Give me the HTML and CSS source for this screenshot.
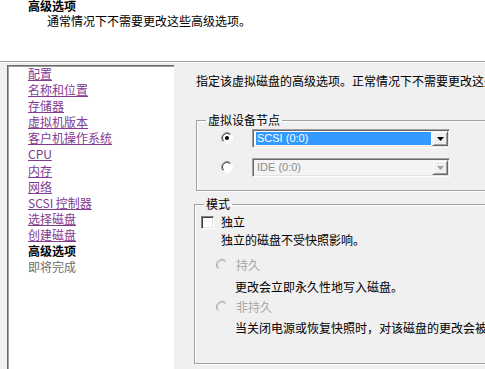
FILE: index.html
```html
<!DOCTYPE html>
<html lang="zh-CN">
<head>
<meta charset="utf-8">
<title>高级选项</title>
<link rel="stylesheet" href="styles.css">
</head>
<body>
<header class="header">
  <div class="title">高级选项</div>
  <div class="subtitle">通常情况下不需要更改这些高级选项。</div>
</header>
<div class="main">
  <nav class="steps">
    <a class="step link">配置</a>
    <a class="step link">名称和位置</a>
    <a class="step link">存储器</a>
    <a class="step link">虚拟机版本</a>
    <a class="step link">客户机操作系统</a>
    <a class="step link">CPU</a>
    <a class="step link">内存</a>
    <a class="step link">网络</a>
    <a class="step link">SCSI 控制器</a>
    <a class="step link">选择磁盘</a>
    <a class="step link">创建磁盘</a>
    <span class="step current">高级选项</span>
    <span class="step pending">即将完成</span>
  </nav>
  <section class="content">
    <p class="intro">指定该虚拟磁盘的高级选项。正常情况下不需要更改这些选项。</p>
    <fieldset class="group node">
      <legend class="legend">虚拟设备节点</legend>
      <div class="node-row">
        <svg class="radio" width="12" height="12" viewBox="0 0 12 12">
          <circle cx="6" cy="6" r="5" fill="#fff"/>
          <path d="M2.1 9.9 A5.5 5.5 0 0 1 9.9 2.1" fill="none" stroke="#9a9a9a" stroke-width="1"/>
          <path d="M2.8 9.2 A4.5 4.5 0 0 1 9.2 2.8" fill="none" stroke="#404040" stroke-width="1"/>
          <path d="M9.9 2.1 A5.5 5.5 0 0 1 2.1 9.9" fill="none" stroke="#ffffff" stroke-width="1"/>
          <circle cx="6" cy="6" r="2" fill="#000"/>
        </svg>
        <div class="combo">
          <span class="combo-value selected">SCSI (0:0)</span>
          <span class="combo-btn">
            <svg width="7" height="4" viewBox="0 0 7 4"><polygon points="0,0 7,0 3.5,4" fill="#000"/></svg>
          </span>
        </div>
      </div>
      <div class="node-row">
        <svg class="radio" width="12" height="12" viewBox="0 0 12 12">
          <circle cx="6" cy="6" r="5" fill="#fff"/>
          <path d="M2.1 9.9 A5.5 5.5 0 0 1 9.9 2.1" fill="none" stroke="#9a9a9a" stroke-width="1"/>
          <path d="M2.8 9.2 A4.5 4.5 0 0 1 9.2 2.8" fill="none" stroke="#404040" stroke-width="1"/>
          <path d="M9.9 2.1 A5.5 5.5 0 0 1 2.1 9.9" fill="none" stroke="#ffffff" stroke-width="1"/>
        </svg>
        <div class="combo disabled">
          <span class="combo-value">IDE (0:0)</span>
          <span class="combo-btn">
            <svg width="7" height="4" viewBox="0 0 7 4"><polygon points="0,0 7,0 3.5,4" fill="#a0a0a0"/></svg>
          </span>
        </div>
      </div>
    </fieldset>
    <fieldset class="group mode">
      <legend class="legend">模式</legend>
      <div class="check-row">
        <span class="checkbox"></span>
        <span class="check-label">独立</span>
      </div>
      <div class="desc">独立的磁盘不受快照影响。</div>
      <div class="option first">
        <svg class="radio" width="12" height="12" viewBox="0 0 12 12">
          <path d="M2.1 9.9 A5.5 5.5 0 0 1 9.9 2.1" fill="none" stroke="#a8a8a8" stroke-width="1"/>
          <path d="M2.8 9.2 A4.5 4.5 0 0 1 9.2 2.8" fill="none" stroke="#c8c8c8" stroke-width="1"/>
        </svg>
        <span class="option-label">持久</span>
      </div>
      <div class="sub-desc">更改会立即永久性地写入磁盘。</div>
      <div class="option">
        <svg class="radio" width="12" height="12" viewBox="0 0 12 12">
          <path d="M2.1 9.9 A5.5 5.5 0 0 1 9.9 2.1" fill="none" stroke="#a8a8a8" stroke-width="1"/>
          <path d="M2.8 9.2 A4.5 4.5 0 0 1 9.2 2.8" fill="none" stroke="#c8c8c8" stroke-width="1"/>
        </svg>
        <span class="option-label">非持久</span>
      </div>
      <div class="sub-desc last">当关闭电源或恢复快照时，对该磁盘的更改会被丢弃。</div>
    </fieldset>
  </section>
</div>
</body>
</html>
```
FILE: styles.css
```css
* { box-sizing: border-box; }
html, body {
  margin: 0;
  padding: 0;
}
body {
  width: 485px;
  height: 369px;
  overflow: hidden;
  background: #f0f0f0;
  font-family: "Noto Sans CJK SC", "Liberation Sans", sans-serif;
  font-size: 12px;
  color: #000;
}
.header {
  height: 62px;
  background: #fff;
  border-bottom: 1px solid #a0a0a0;
  box-shadow: 0 1px 0 #fff;
}
.title {
  padding-left: 28px;
  line-height: 12px;
  font-weight: bold;
}
.subtitle {
  padding-left: 47px;
  margin-top: 2px;
  line-height: 14px;
}
.main {
  display: flex;
  height: 307px;
}
.steps {
  margin: 3px 0 0 7px;
  width: 167px;
  flex: none;
  background: #fff;
  border-top: 1px solid #696969;
  border-left: 1px solid #696969;
  box-shadow: inset 1px 1px 0 #a0a0a0;
  padding: 0 0 0 20px;
  display: flex;
  flex-direction: column;
}
.step {
  line-height: 16.1px;
  white-space: nowrap;
}
.link {
  color: #823a93;
  text-decoration: underline;
}
.current {
  font-weight: bold;
  color: #000;
}
.pending {
  color: #6d6d6d;
}
.content {
  flex: 1;
  min-width: 0;
  overflow: hidden;
  padding-left: 22px;
}
.intro {
  margin: 11px 0 0;
  line-height: 16px;
  white-space: nowrap;
}
.group {
  margin: 0;
  padding: 0;
  width: 330px;
  border: 1px solid #a0a0a0;
  box-shadow: inset 1px 1px 0 #fff, 1px 1px 0 #fff;
}
.legend {
  margin-left: 9px;
  padding: 0 2px;
  line-height: 14px;
}
.node {
  margin-top: 24px;
  padding: 1px 0 13px;
}
.node-row {
  display: flex;
  align-items: center;
  height: 20px;
  padding-left: 24px;
}
.node-row + .node-row {
  margin-top: 9px;
}
.radio {
  flex: none;
  display: block;
}
.combo {
  margin-left: 19px;
  width: 198px;
  height: 19px;
  display: flex;
  background: #fff;
  border-top: 1px solid #a0a0a0;
  border-left: 1px solid #a0a0a0;
  border-right: 1px solid #fff;
  border-bottom: 1px solid #fff;
  box-shadow: inset 1px 1px 0 #696969, inset -1px -1px 0 #e3e3e3;
  padding: 1px;
}
.combo-value {
  flex: 1;
  margin: 1px 1px 1px 2px;
  padding-left: 1px;
  font-family: "Liberation Sans", sans-serif;
  font-size: 11px;
  line-height: 13px;
}
.combo-value.selected {
  background: #3399ff;
  color: #fff;
}
.combo.disabled {
  background: #f4f4f4;
}
.combo.disabled .combo-value {
  color: #8a8a8a;
}
.combo-btn {
  flex: none;
  width: 16px;
  display: flex;
  align-items: center;
  justify-content: center;
  background: #f0f0f0;
  border-top: 1px solid #f0f0f0;
  border-left: 1px solid #f0f0f0;
  border-right: 1px solid #696969;
  border-bottom: 1px solid #696969;
  box-shadow: inset 1px 1px 0 #fff, inset -1px -1px 0 #a0a0a0;
}
.combo-btn svg {
  display: block;
  margin-top: 1px;
}
.mode {
  margin-top: 6px;
  margin-left: -2px;
  padding: 2px 0 26px;
  line-height: 18px;
}
.check-row {
  display: flex;
  align-items: center;
  padding-left: 6px;
}
.checkbox {
  width: 13px;
  height: 13px;
  flex: none;
  background: #fff;
  border-top: 1px solid #808080;
  border-left: 1px solid #808080;
  border-right: 1px solid #fff;
  border-bottom: 1px solid #fff;
  box-shadow: inset 1px 1px 0 #404040, inset -1px -1px 0 #e3e3e3;
}
.check-label {
  margin-left: 7px;
}
.desc {
  padding-left: 26px;
}
.option {
  display: flex;
  align-items: center;
  padding-left: 21px;
  margin-top: 2px;
}
.option.first {
  margin-top: 7px;
}
.option-label {
  margin-left: 8px;
  color: #a8a8a8;
}
.sub-desc {
  padding-left: 40px;
  margin-top: 4px;
  white-space: nowrap;
}
.sub-desc.last {
  margin-top: 3px;
}
```
